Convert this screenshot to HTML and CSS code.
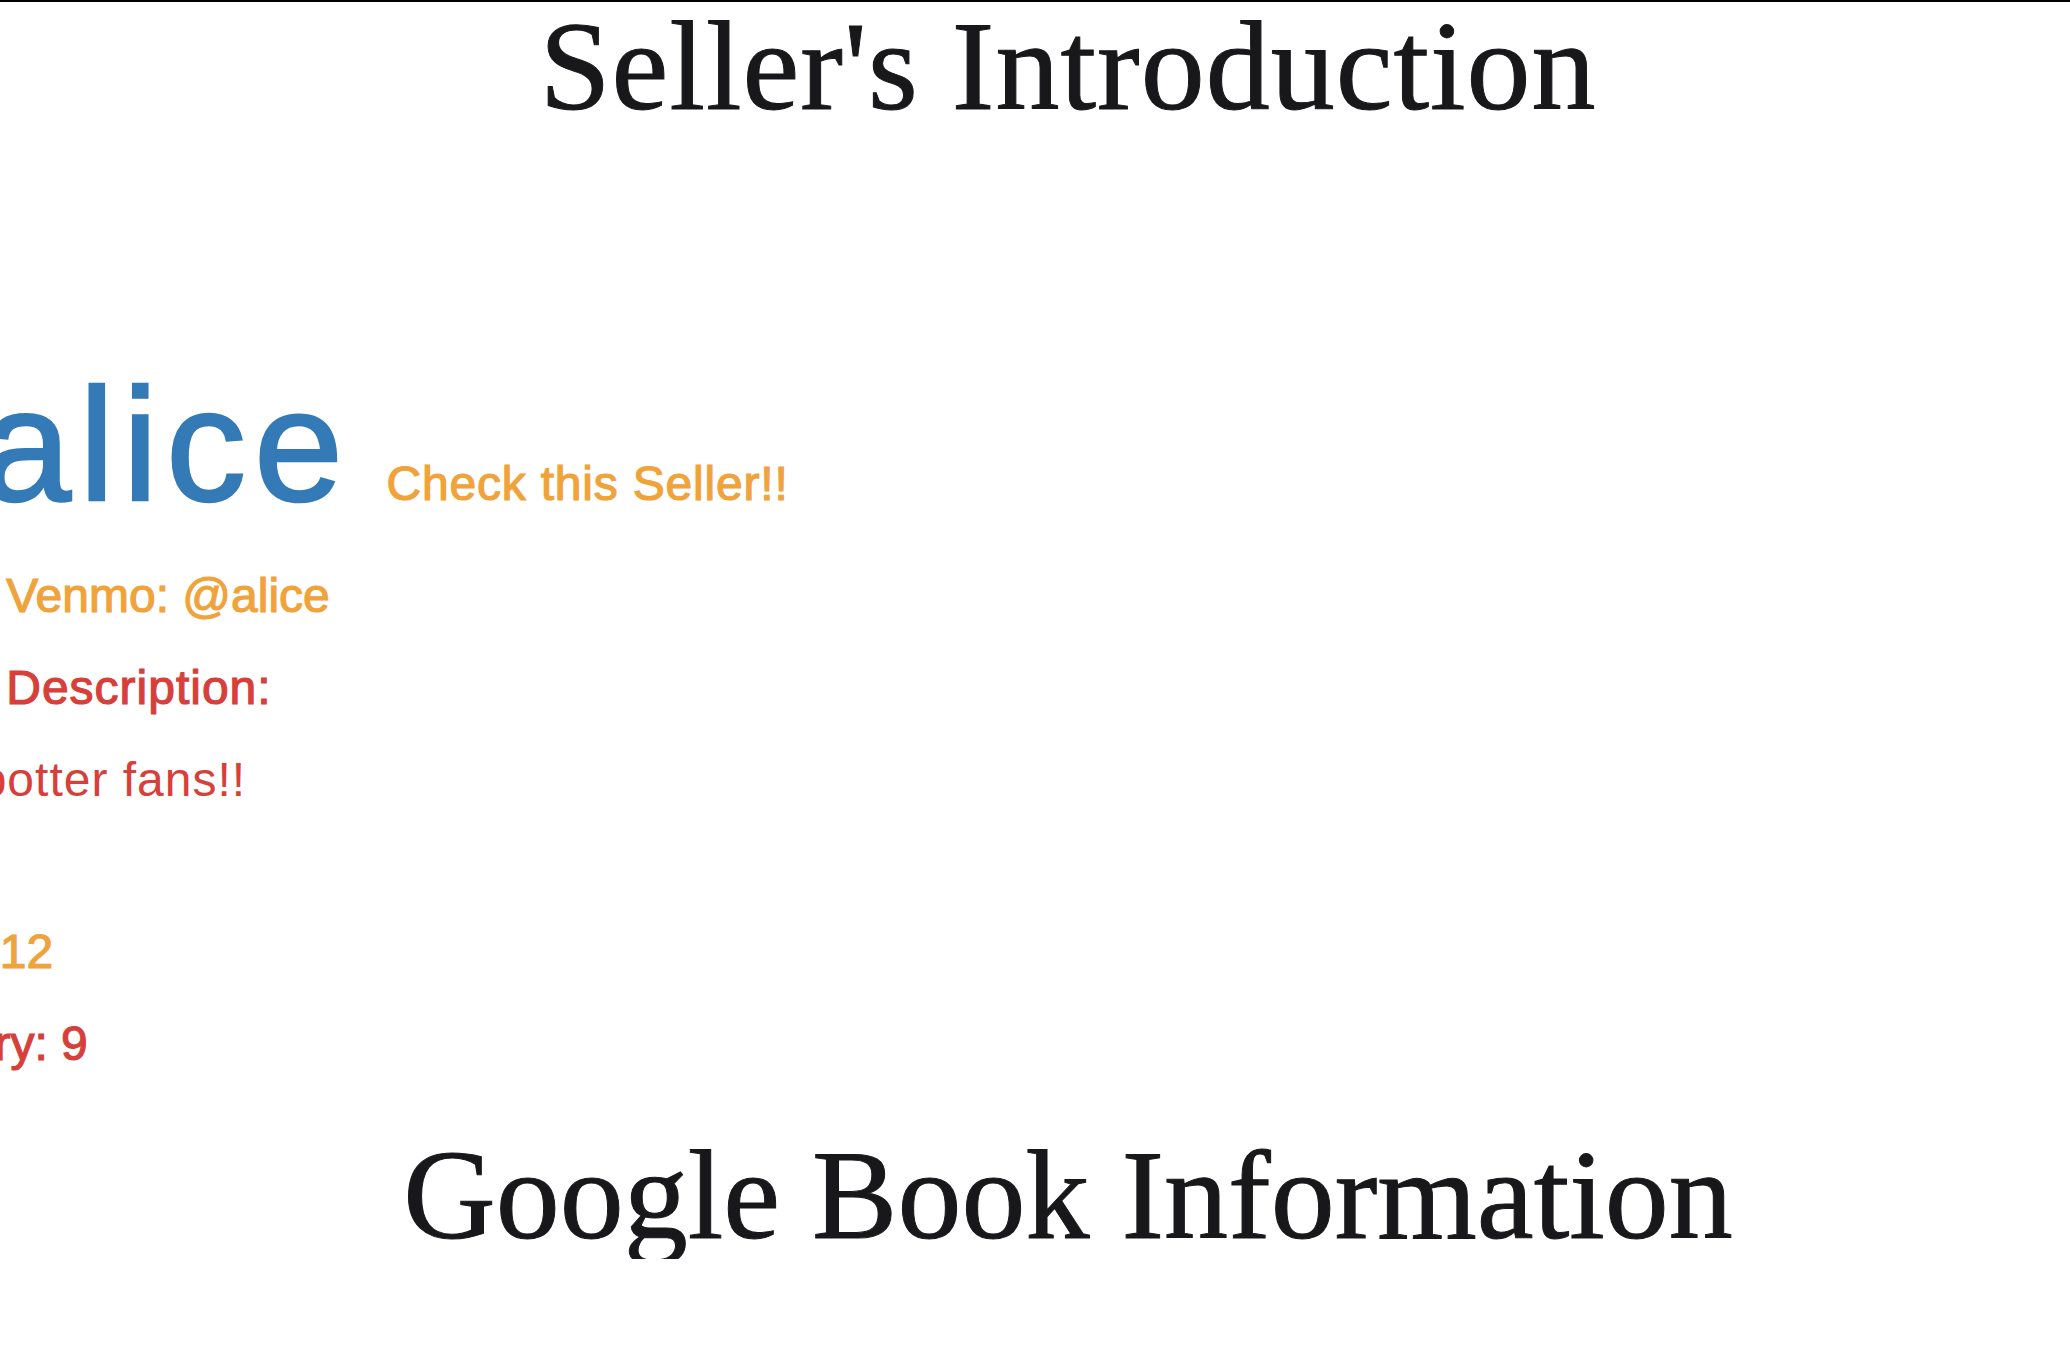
FILE: index.html
```html
<!DOCTYPE html>
<html lang="en">
<head>
<meta charset="utf-8">
<title>Seller's Introduction</title>
<link rel="stylesheet" href="styles.css">
</head>
<body>
<div class="page">
  <h2 class="section-title intro-title">Seller's Introduction</h2>
  <section class="seller">
    <h1 class="seller-name"><span class="seller-handle">alice</span> <small class="seller-link">Check this Seller!!</small></h1>
    <h3 class="info warn">Seller's Venmo: @alice</h3>
    <h3 class="info danger">Seller's <span class="wide">Description:</span></h3>
    <p class="desc">Harry potter fans!!</p>
    <h3 class="info warn price">Price: $12</h3>
    <h3 class="info danger">Inventory: 9</h3>
  </section>
  <h2 class="section-title book-title">Google Book Information</h2>
</div>
</body>
</html>
```

FILE: styles.css
```css
html, body {
  margin: 0;
  padding: 0;
  background: #ffffff;
}

body {
  border-top: 2px solid #000000;
  overflow: hidden;
  font-family: "Liberation Sans", Arial, sans-serif;
}

.page {
  width: 2462px;
  margin-left: -163px;
}

.section-title {
  margin: 0;
  text-align: center;
  font-family: "Liberation Serif", "Times New Roman", serif;
  font-weight: 400;
  font-size: 128px;
  line-height: 128px;
  color: #18181b;
  -webkit-text-stroke: 1px #18181b;
}

.intro-title {
  letter-spacing: 1px;
}

.book-title {
  margin-top: 61px;
}

.seller {
  display: flex;
  flex-direction: column;
  align-items: flex-start;
}

.seller-name {
  margin: 230px 0 0 145px;
  font-size: 160px;
  line-height: 170px;
  font-weight: 400;
  word-spacing: -9px;
  color: #337ab7;
  -webkit-text-stroke: 2.5px #337ab7;
  white-space: nowrap;
}

.seller-handle {
  letter-spacing: 8px;
}

.seller-link {
  font-size: 48px;
  line-height: 52px;
  letter-spacing: 0.8px;
  word-spacing: 0;
  color: #f0a33a;
  -webkit-text-stroke: 1.2px #f0a33a;
}

.info {
  margin: 40px 0 0;
  font-size: 48px;
  line-height: 52px;
  font-weight: 400;
  white-space: nowrap;
}

.wide {
  letter-spacing: 1px;
}

.warn {
  color: #f0a33a;
  -webkit-text-stroke: 1.2px #f0a33a;
}

.danger {
  color: #d73f3a;
  -webkit-text-stroke: 1.2px #d73f3a;
}

.desc {
  margin: 40px 0 0 6px;
  font-size: 48px;
  line-height: 52px;
  letter-spacing: 1px;
  color: #d73f3a;
  white-space: nowrap;
}

.price {
  margin-top: 120px;
}
```
